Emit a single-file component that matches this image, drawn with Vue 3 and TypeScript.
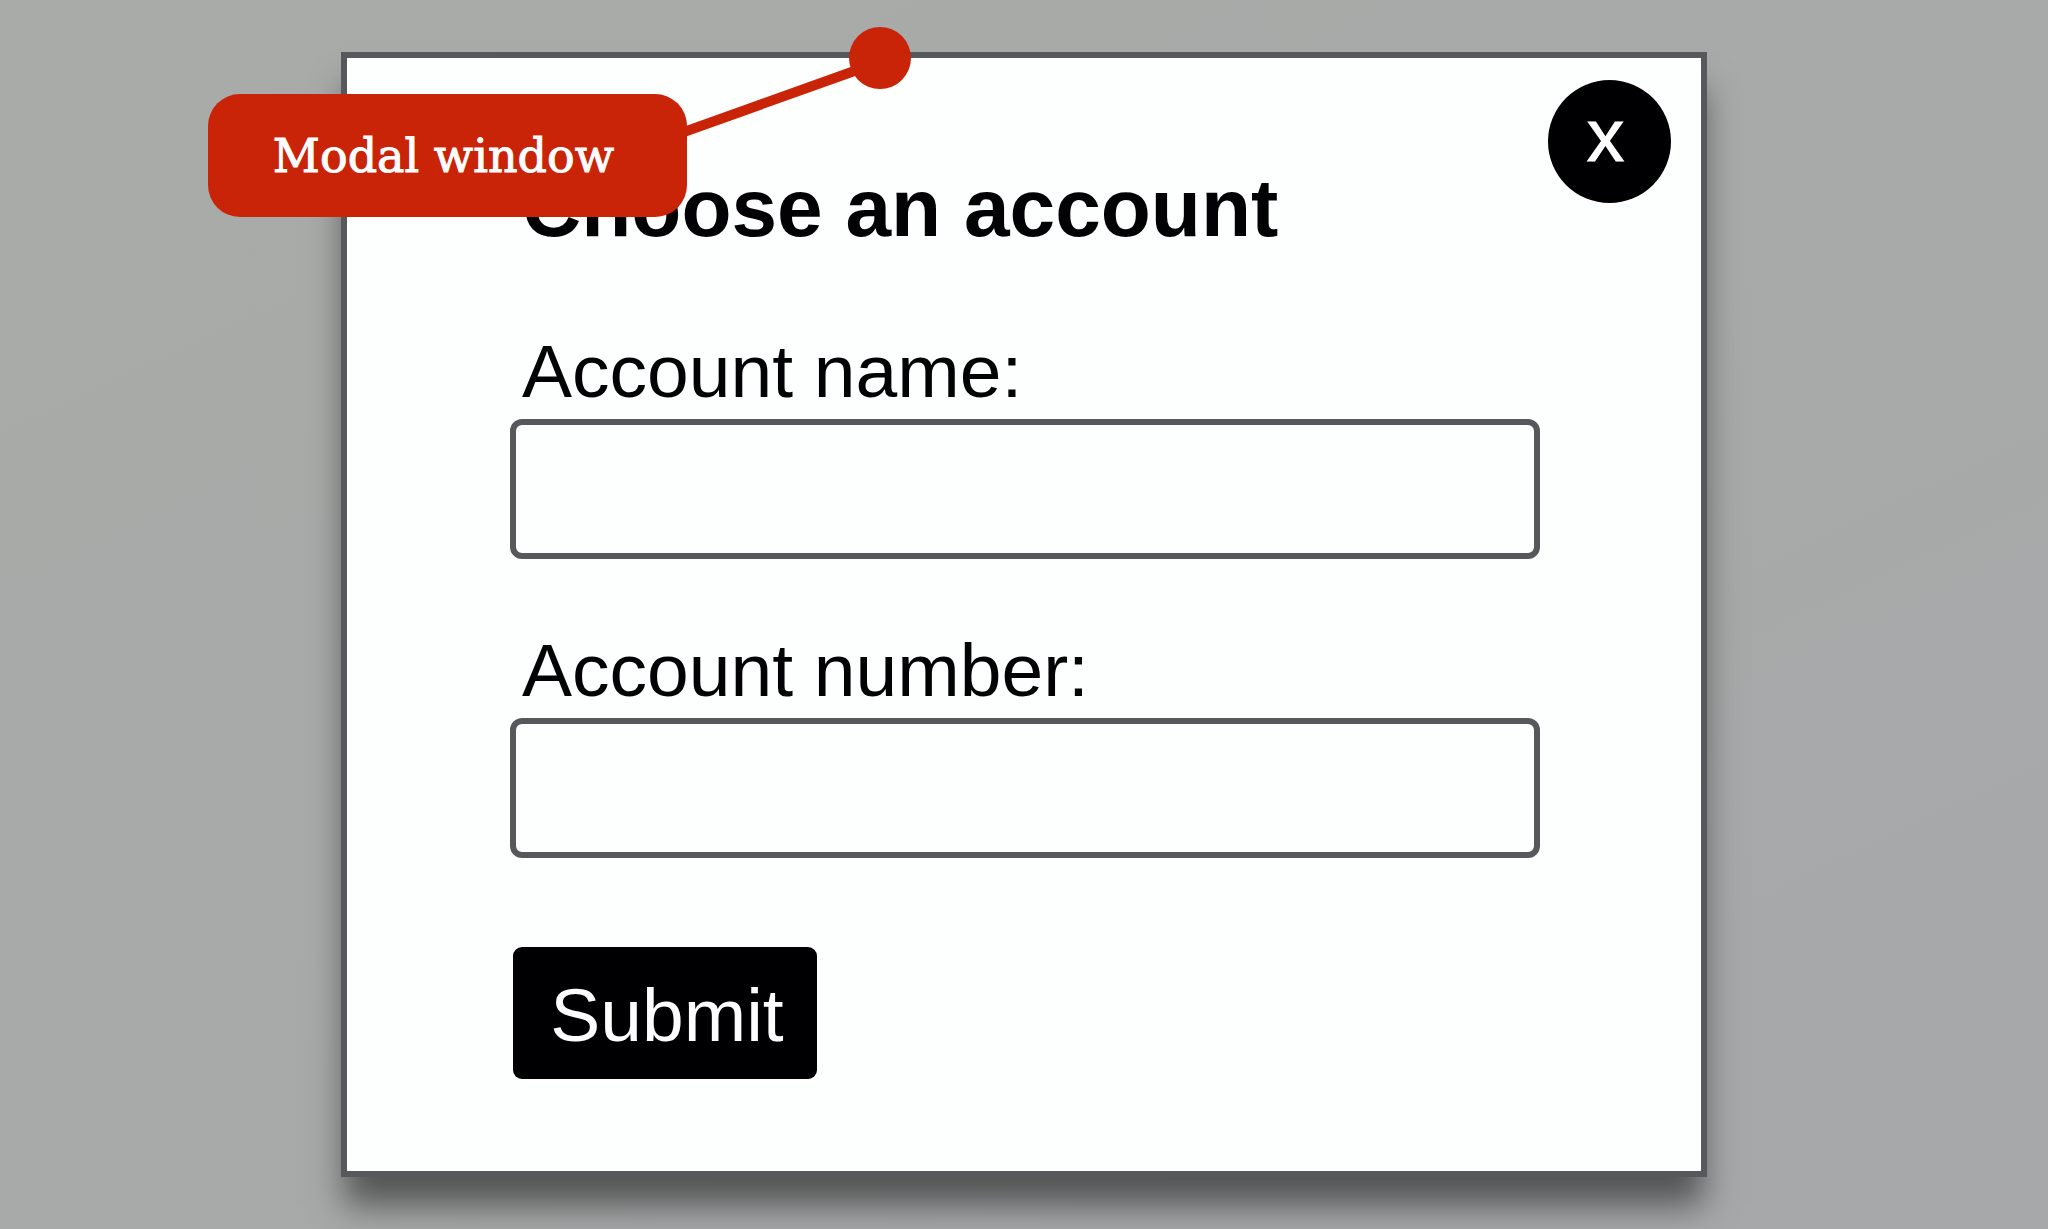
<script setup lang="ts">
import { ref } from 'vue'

interface Field {
  id: string
  label: string
}

const fields: Field[] = [
  { id: 'account-name', label: 'Account name:' },
  { id: 'account-number', label: 'Account number:' },
]

const values = ref<Record<string, string>>({})
</script>

<template>
  <main class="backdrop">
    <section class="modal" role="dialog" aria-labelledby="modal-title">
      <h1 id="modal-title" class="title">Choose an account</h1>
      <form class="form" @submit.prevent>
        <div v-for="field in fields" :key="field.id" class="field">
          <label class="label" :for="field.id">{{ field.label }}</label>
          <input :id="field.id" v-model="values[field.id]" class="input" type="text" />
        </div>
        <button class="submit" type="submit">Submit</button>
      </form>
      <button class="close" type="button" aria-label="Close">x</button>

      <div class="callout">
        <span class="callout-text">Modal window</span>
        <svg class="pointer" width="230" height="120" viewBox="0 0 230 120" aria-hidden="true">
          <line x1="0" y1="106" x2="193" y2="37" stroke="#c92408" stroke-width="10" />
          <circle cx="199" cy="31" r="31" fill="#c92408" />
        </svg>
      </div>
    </section>
  </main>
</template>

<style>
body {
  margin: 0;
}
</style>

<style scoped>
.backdrop {
  box-sizing: border-box;
  min-height: 100vh;
  padding: 52px 0;
  overflow: hidden;
  background: linear-gradient(155deg, #a8aba8 0%, #a7aaa8 50%, #a7a8aa 80%);
  font-family: "Liberation Sans", Arial, sans-serif;
  color: #020204;
}

.modal {
  position: relative;
  box-sizing: border-box;
  width: 66.7%;
  margin: 0 auto;
  padding: 102px 161px 92px 163px;
  border: 6px solid #57585b;
  background: #fdfefe;
  box-shadow: 0 32px 32px -4px rgba(0, 0, 0, 0.5);
}

.title {
  margin: 0;
  padding-left: 12px;
  font-size: 82px;
  line-height: 96px;
  font-weight: 700;
  white-space: nowrap;
}

.form {
  display: flex;
  flex-direction: column;
  align-items: flex-start;
  padding-top: 73px;
}

.field {
  display: flex;
  flex-direction: column;
  gap: 5px;
  width: 100%;
  margin-bottom: 69px;
}

.label {
  padding-left: 12px;
  font-size: 75px;
  line-height: 85px;
  white-space: nowrap;
}

.input {
  box-sizing: border-box;
  width: 100%;
  height: 140px;
  padding: 0 24px;
  border: 6px solid #57585b;
  border-radius: 12px;
  background: #fdfefe;
  font: inherit;
  font-size: 75px;
  outline: none;
}

.submit {
  width: 304px;
  height: 132px;
  margin: 20px 0 0 3px;
  padding: 4px 0 0 4px;
  border: 0;
  border-radius: 9px;
  background: #000002;
  color: #fdfdff;
  font: inherit;
  font-size: 75px;
}

.close {
  position: absolute;
  top: 22px;
  right: 30px;
  display: flex;
  align-items: center;
  justify-content: center;
  width: 123px;
  height: 123px;
  padding: 0 8px 14px 0;
  border: 0;
  border-radius: 50%;
  background: #000002;
  color: #ffffff;
  font: inherit;
  font-size: 75px;
  -webkit-text-stroke: 1px currentColor;
}

.callout {
  position: absolute;
  top: 36px;
  left: -139px;
  display: flex;
  align-items: center;
  justify-content: center;
  width: 479px;
  height: 123px;
  border-radius: 32px;
  background: #c92408;
  color: #ffffff;
  font-family: "DejaVu Serif", serif;
  font-size: 46px;
  -webkit-text-stroke: 1px currentColor;
}

.callout-text {
  padding-right: 8px;
  white-space: nowrap;
}

.pointer {
  position: absolute;
  top: -67px;
  left: 473px;
}
</style>
